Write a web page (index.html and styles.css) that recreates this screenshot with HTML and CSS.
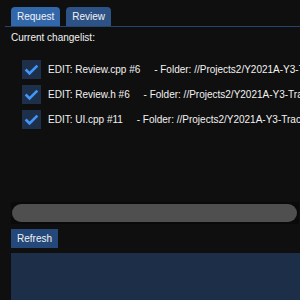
FILE: index.html
```html
<!DOCTYPE html>
<html>
<head>
<meta charset="utf-8">
<link rel="stylesheet" href="styles.css">
</head>
<body>
<div class="tabbar">
  <div class="tab tab-active">Request</div>
  <div class="tab">Review</div>
</div>
<div class="content">
  <div class="label">Current changelist:</div>
  <div class="child">
    <div class="row">
      <span class="check"><svg width="19" height="19" viewBox="0 0 19 19"><polyline points="3.65,9.5 7.55,13.4 15.35,5.6" fill="none" stroke="#4296fa" stroke-width="2.6"/></svg></span>
      <span class="item">EDIT: Review.cpp #6     - Folder: //Projects2/Y2021A-Y3-Track</span>
    </div>
    <div class="row">
      <span class="check"><svg width="19" height="19" viewBox="0 0 19 19"><polyline points="3.65,9.5 7.55,13.4 15.35,5.6" fill="none" stroke="#4296fa" stroke-width="2.6"/></svg></span>
      <span class="item">EDIT: Review.h #6     - Folder: //Projects2/Y2021A-Y3-Track</span>
    </div>
    <div class="row">
      <span class="check"><svg width="19" height="19" viewBox="0 0 19 19"><polyline points="3.65,9.5 7.55,13.4 15.35,5.6" fill="none" stroke="#4296fa" stroke-width="2.6"/></svg></span>
      <span class="item">EDIT: UI.cpp #11     - Folder: //Projects2/Y2021A-Y3-Track</span>
    </div>
  </div>
  <div class="hscroll"><div class="grab"></div></div>
  <div class="button">Refresh</div>
  <div class="panel"></div>
</div>
</body>
</html>
```
FILE: styles.css
```css
html, body {
  margin: 0;
  padding: 0;
  background: #0f0f0f;
  width: 300px;
  height: 300px;
  overflow: hidden;
  font-family: "Liberation Sans", Arial, sans-serif;
  font-size: 10px;
  color: #f2f2f2;
}
.tabbar {
  display: flex;
  gap: 6px;
  margin: 7px 0 0 5px;
  padding-left: 6px;
  height: 19px;
  border-bottom: 1px solid #23456e;
}
.tab {
  height: 19px;
  line-height: 19px;
  padding: 0 6px;
  background: #2d5286;
  border-radius: 4px 4px 0 0;
  white-space: nowrap;
}
.tab-active {
  background: #3268aa;
}
.content {
  padding-left: 11px;
  display: flex;
  flex-direction: column;
  overflow: hidden;
}
.label {
  margin-top: 4px;
  line-height: 13px;
  height: 13px;
}
.child {
  margin-top: 16px;
  height: 142px;
  padding-left: 11px;
  display: flex;
  flex-direction: column;
  gap: 6px;
  overflow: hidden;
}
.row {
  display: flex;
  align-items: center;
  gap: 7px;
  height: 19px;
  white-space: pre;
}
.check {
  flex: none;
  width: 19px;
  height: 19px;
  background: #1d2f49;
  display: block;
}
.check svg {
  display: block;
}
.item {
  line-height: 19px;
}
.hscroll {
  width: 288px;
  height: 22px;
  box-sizing: border-box;
  padding: 2px 2px 2px 1px;
  background: #0a0a0a;
  display: flex;
}
.grab {
  flex: 1;
  background: #4f4f4f;
  border-radius: 9px;
}
.button {
  align-self: flex-start;
  margin-top: 5px;
  height: 19px;
  line-height: 19px;
  padding: 0 6px;
  background: #24487a;
}
.panel {
  margin-top: 5px;
  height: 60px;
  background: #1d2e48;
}
```
